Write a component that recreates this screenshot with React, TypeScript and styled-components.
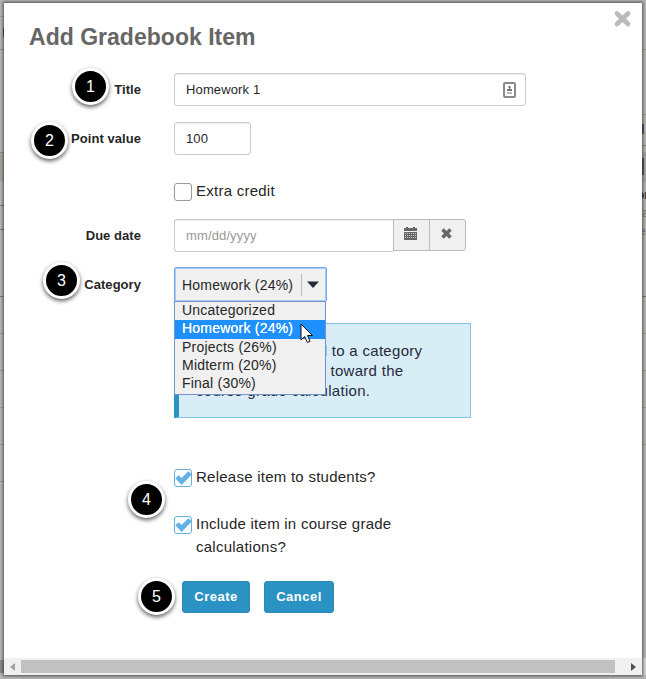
import React from "react";
import styled, { createGlobalStyle, css } from "styled-components";

const Global = createGlobalStyle`
  * { box-sizing: border-box; }
  body { margin: 0; font-family: "Liberation Sans", Arial, sans-serif; color: #262626; overflow: hidden; }
`;

const Page = styled.div`
  position: relative;
  width: 646px;
  height: 679px;
  padding: 3px 4px 4px;
  background:
    linear-gradient(#b5b5b5, #b5b5b5) 0 0 / 100% 3px no-repeat,
    linear-gradient(#444, #444) 3px 28px / 1px 9px no-repeat,
    linear-gradient(to bottom, transparent 16px, #999 16px 17px, transparent 17px 49px, #929292 49px 50px, transparent 50px 152px, #8e8c88 152px 153px, #aaa79f 153px 181px, transparent 181px 205px, #777 205px 206px, transparent 206px 229px, #777 229px 230px, transparent 230px 296px, #777 296px 297px, transparent 297px 333px, #999 333px 334px, transparent 334px 370px, #999 370px 371px, transparent 371px 407px, #999 407px 408px, transparent 408px 444px, #999 444px 445px, transparent 445px 481px, #999 481px 482px, transparent 482px 660px, #888 660px 673px, transparent 673px) 0 0 / 4px 100% no-repeat,
    linear-gradient(to bottom, transparent 49px, #929292 49px 50px, transparent 50px 152px, #a8a8a8 152px 182px, transparent 182px 296px, #777 296px 297px, transparent 297px 333px, #999 333px 334px, transparent 334px 370px, #999 370px 371px, transparent 371px 407px, #999 407px 408px, transparent 408px 444px, #999 444px 445px, transparent 445px 658px, #d8d8d8 658px 675px, transparent 675px) 642px 0 / 4px 100% no-repeat,
    #b9b8b6;
`;

const Behind = styled.div`
  position: absolute;
  right: 0;
  top: 114px;
  width: 4px;
  height: 130px;
  padding-top: 72px;
  overflow: hidden;
  font-size: 12px;
  line-height: 18px;
  color: #777;
  white-space: nowrap;
  background:
    linear-gradient(#4c4a5c, #4c4a5c) 0 10px / 2px 10px no-repeat,
    linear-gradient(#4c4a5c, #4c4a5c) 0 44px / 2px 17px no-repeat,
    linear-gradient(#999, #999) 0 0 / 4px 1px no-repeat,
    linear-gradient(#888, #888) 0 31px / 4px 1px no-repeat;
  b { display: block; color: #22252e; margin-left: -5px; }
  span { display: block; margin-left: -3px; }
`;

const Dialog = styled.main`
  position: relative;
  width: 638px;
  height: 672px;
  background: #fff;
  box-shadow: 0 0 3px 1px rgba(50, 50, 50, 0.8);
  display: flex;
  flex-direction: column;
`;

const Header = styled.header`
  display: flex;
  justify-content: space-between;
  height: 70px;
  padding: 5px 9px 0 25px;
`;

const Heading = styled.h1`
  margin: 15px 0 0;
  font-size: 23px;
  line-height: 28px;
  letter-spacing: 0.02px;
  color: #666;
`;

const CloseIcon = styled.svg`
  width: 21px;
  height: 21px;
`;

const Form = styled.form`
  flex: 1;
  display: flex;
  flex-direction: column;
`;

const Row = styled.div<{ $h: number; $gapAbove?: number }>`
  display: grid;
  grid-template-columns: 137px 1fr;
  column-gap: 33px;
  height: ${(p) => p.$h}px;
  margin-top: ${(p) => p.$gapAbove ?? 0}px;
  align-items: start;
`;

const Label = styled.label`
  font-size: 13px;
  font-weight: bold;
  line-height: 33px;
  letter-spacing: 0.05px;
  text-align: right;
  white-space: nowrap;
`;

const Field = styled.div<{ $w: number; $joined?: boolean; $muted?: boolean }>`
  display: flex;
  align-items: center;
  justify-content: space-between;
  width: ${(p) => p.$w}px;
  height: 33px;
  padding: 0 9px 0 11px;
  border: 1px solid #ccc;
  border-radius: ${(p) => (p.$joined ? "3px 0 0 3px" : "3px")};
  ${(p) => p.$joined && css`border-right: 0;`}
  box-shadow: inset 0 1px 1px rgba(0, 0, 0, 0.07);
  font-size: 13px;
  letter-spacing: 0.13px;
  color: ${(p) => (p.$muted ? "#999" : "#262626")};
`;

const Group = styled.div`
  display: flex;
  align-items: flex-start;
`;

const Addon = styled.button<{ $last?: boolean }>`
  display: flex;
  align-items: center;
  justify-content: center;
  width: 37px;
  height: 32px;
  padding: 0 2px 3px 0;
  border: 1px solid #bbb;
  margin-left: ${(p) => (p.$last ? "-1px" : "0")};
  border-radius: ${(p) => (p.$last ? "0 3px 3px 0" : "0")};
  background: #f0f0f0;
`;

const Check = styled.label`
  display: flex;
  align-items: flex-start;
  gap: 4px;
  font-size: 15px;
  line-height: 23px;
  letter-spacing: 0.25px;
  width: 260px;
`;

const Box = styled.span<{ $on?: boolean }>`
  flex: none;
  width: 18px;
  height: 18px;
  margin-top: 4px;
  border: 1px solid ${(p) => (p.$on ? "#62b0e4" : "#999")};
  border-radius: 3px;
  svg { display: block; width: 17px; height: 16px; }
`;

const SelectWrap = styled.div`
  position: relative;
  width: 153px;
`;

const Select = styled.div`
  display: flex;
  align-items: center;
  height: 35px;
  margin-top: -1px;
  padding-left: 7px;
  border: 1px solid #73a6ec;
  box-shadow: inset 0 0 0 1px #a9cbf8;
  border-radius: 2px;
  background: #f0f0f0;
  font-size: 14px;
  letter-spacing: 0.22px;
  svg { margin-left: 5px; }
`;

const Divider = styled.i`
  width: 1px;
  height: 22px;
  margin-left: 8px;
  background: #bbb;
`;

const Menu = styled.ul`
  position: absolute;
  z-index: 2;
  top: 33px;
  left: 0;
  width: 152px;
  height: 94px;
  margin: 0;
  padding: 0;
  list-style: none;
  border: 1px solid #7393cc;
  background: #f0f0f0;
`;

const Option = styled.li<{ $active?: boolean }>`
  height: ${(p) => (p.$active ? 19 : 18)}px;
  padding-left: 7px;
  font-size: 14px;
  line-height: 17px;
  letter-spacing: 0.22px;
  color: ${(p) => (p.$active ? "#fff" : "#262626")};
  background: ${(p) => (p.$active ? "#1e90ff" : "transparent")};
  ${(p) => p.$active && css`text-shadow: 0 0 0.5px #fff;`}
`;

const Cursor = styled.svg`
  position: absolute;
  z-index: 3;
  left: 126px;
  top: 55px;
  width: 14px;
  height: 21px;
`;

const Notice = styled.div`
  width: 297px;
  height: 95px;
  margin: 6px 0 0 170px;
  padding: 17px 20px 0 17px;
  border: 1px solid #80c5e6;
  border-left: 5px solid #2b93c3;
  background: #d9edf7;
  font-size: 15px;
  line-height: 20px;
  letter-spacing: 0.3px;
  color: #262a3a;
  white-space: nowrap;
`;

const Actions = styled.div`
  display: flex;
  gap: 14px;
  padding-left: 178px;
`;

const Button = styled.button<{ $w: number }>`
  width: ${(p) => p.$w}px;
  height: 32px;
  padding: 0 0 1px;
  border: 1px solid #2b89b6;
  border-radius: 3px;
  background: #2b93c3;
  color: #fff;
  font: bold 13px "Liberation Sans", Arial, sans-serif;
  letter-spacing: 0.5px;
`;

const Step = styled.span<{ $x: number; $y: number }>`
  position: absolute;
  left: ${(p) => p.$x}px;
  top: ${(p) => p.$y}px;
  width: 37px;
  height: 37px;
  border: 3px solid #fff;
  border-radius: 50%;
  background: #000;
  box-shadow: 0 2px 4px rgba(0, 0, 0, 0.65);
  color: #fff;
  font-size: 16px;
  line-height: 31px;
  text-align: center;
`;

const Scrollbar = styled.div`
  display: flex;
  align-items: center;
  justify-content: space-between;
  height: 17px;
  padding: 0 6px;
  background: #f0f0f0;
`;

const Thumb = styled.div`
  width: 594px;
  height: 13px;
  margin-right: 10px;
  background: #c1c1c1;
`;

const Tick = () => (
  <svg viewBox="0 0 17 16"><path d="M0.3 8.2L3.6 5.2L6.6 8L13.3 1.2L17 4.2L6.6 15z" fill="#62b0e4" /></svg>
);

const steps: [number, number][] = [[68, 65], [27, 119], [39, 259], [124, 478], [134, 575]];

export default function App() {
  return (
    <>
      <Global />
      <Page>
        <Behind><b>or</b><span>ta</span><span>e</span></Behind>
        <Dialog>
          <Header>
            <Heading>Add Gradebook Item</Heading>
            <CloseIcon viewBox="0 0 21 21"><path d="M5 5.5L16 16M16 5.5L5 16" stroke="#bbb" strokeWidth="4.8" strokeLinecap="round" /></CloseIcon>
          </Header>
          <Form>
            <Row $h={49}>
              <Label>Title</Label>
              <Field $w={352}>Homework 1
                <svg width="13" height="16" viewBox="0 0 13 16"><rect x="1" y="1" width="11" height="14" rx="1" fill="#fff" stroke="#8b8b8b" strokeWidth="2" /><circle cx="6.5" cy="5" r="1.2" fill="#777" /><path d="M6 5h1v2h2v2H4V7h2zM4 10.5h5v1H4z" fill="#777" /></svg>
              </Field>
            </Row>
            <Row $h={57}><Label>Point value</Label><Field $w={77}>100</Field></Row>
            <Row $h={40}><span /><Check><Box />Extra credit</Check></Row>
            <Row $h={49}>
              <Label>Due date</Label>
              <Group>
                <Field $w={219} $joined $muted>mm/dd/yyyy</Field>
                <Addon type="button"><svg width="13" height="13" viewBox="0 0 13 13"><path d="M0 4V1h2V0h2v1h5V0h2v1h2v3zM0 5h13v8H0z" fill="#666" /><path d="M1 6.5h11M1 8.5h11M1 10.5h11" stroke="#ccc" strokeDasharray="1 1" /></svg></Addon>
                <Addon type="button" $last><svg width="11" height="11" viewBox="0 0 11 11"><path d="M1.5 1.5L9.5 9.5M9.5 1.5L1.5 9.5" stroke="#666" strokeWidth="3.5" /></svg></Addon>
              </Group>
            </Row>
            <Row $h={49}>
              <Label>Category</Label>
              <SelectWrap>
                <Select>Homework (24%)<Divider /><svg width="12" height="7" viewBox="0 0 12 7"><path d="M0 0.5h12L6 7z" fill="#262b38" /></svg></Select>
                <Menu>
                  <Option>Uncategorized</Option>
                  <Option $active>Homework (24%)</Option>
                  <Option>Projects (26%)</Option>
                  <Option>Midterm (20%)</Option>
                  <Option>Final (30%)</Option>
                </Menu>
                <Cursor viewBox="0 0 14 21"><path d="M1 1V17L4.7 13.5L7.4 19.5L10 18.4L7.5 12.5H12.5z" fill="#fff" stroke="#111" /></Cursor>
              </SelectWrap>
            </Row>
            <Notice>Items not assigned to a category<br />will not be counted toward the<br />course grade calculation.</Notice>
            <Row $h={47} $gapAbove={47}><span /><Check><Box $on><Tick /></Box>Release item to students?</Check></Row>
            <Row $h={69}><span /><Check><Box $on><Tick /></Box><span>Include item in course grade<br />calculations?</span></Check></Row>
            <Actions><Button type="button" $w={68}>Create</Button><Button type="button" $w={70}>Cancel</Button></Actions>
          </Form>
          <Scrollbar>
            <svg width="5" height="8"><path d="M5 0v8L0 4z" fill="#a3a3a3" /></svg>
            <Thumb />
            <svg width="5" height="8"><path d="M0 0v8L5 4z" fill="#505050" /></svg>
          </Scrollbar>
          {steps.map(([x, y], i) => <Step key={i} $x={x} $y={y}>{i + 1}</Step>)}
        </Dialog>
      </Page>
    </>
  );
}
